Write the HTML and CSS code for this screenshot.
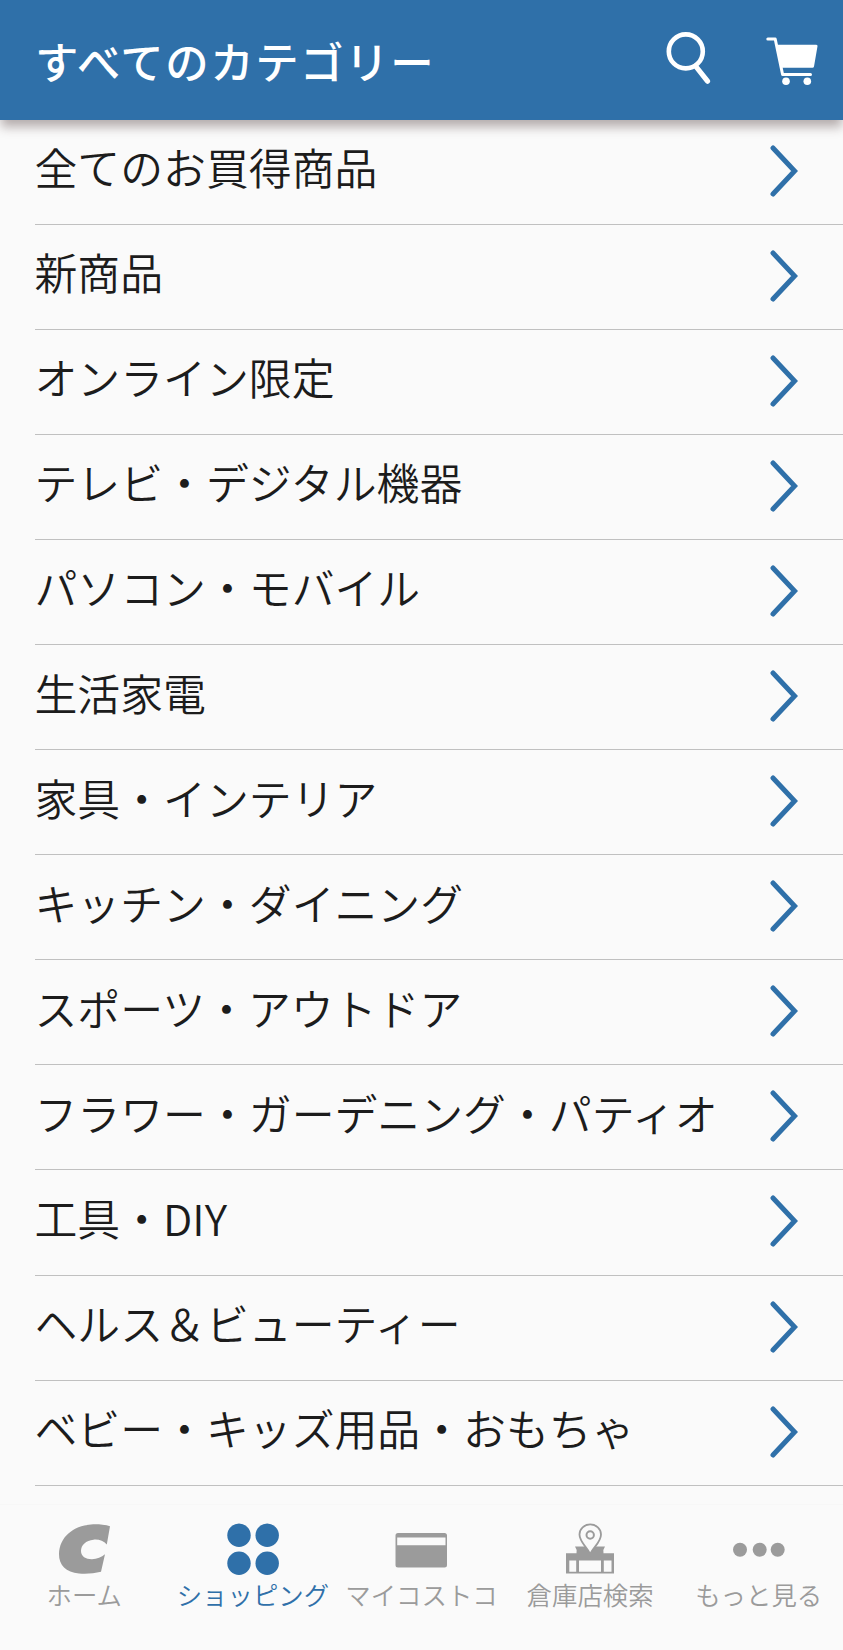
FILE: index.html
```html
<!DOCTYPE html>
<html lang="ja">
<head>
<meta charset="utf-8">
<title>すべてのカテゴリー</title>
<link rel="stylesheet" href="styles.css">
</head>
<body>
<svg class="defs" width="0" height="0">
  <symbol id="chevron" viewBox="0 0 28 52"><path d="M3 3 24.600 26 3 49" fill="none" stroke="currentColor" stroke-width="5" stroke-linecap="round"/></symbol>
</svg>
<div class="screen">
  <header class="topbar">
    <h1 class="title">すべてのカテゴリー</h1>
    <svg class="search" viewBox="0 0 46 52"><circle cx="19.800" cy="19.400" r="17" fill="none" stroke="#fff" stroke-width="4.600"/><path d="M29.500 34 41.500 49.200" stroke="#fff" stroke-width="5.200" stroke-linecap="round"/></svg>
    <svg class="cart" viewBox="0 0 54 50"><path d="M1.800 3h7.400L16.600 38.500H44.500" fill="none" stroke="#fff" stroke-width="3" stroke-linecap="round" stroke-linejoin="round"/><path d="M10 8.800H50.300Q51.800 8.800 51.500 10.300L48 30.500Q47.700 31.700 46.500 31.700H14.800z" fill="#fff"/><circle cx="20" cy="45.200" r="3.800" fill="#fff"/><circle cx="41.300" cy="45.200" r="3.800" fill="#fff"/></svg>
  </header>
  <ul class="list">
    <li class="row"><span class="label">全てのお買得商品</span><svg class="chevron"><use href="#chevron"/></svg></li>
    <li class="row"><span class="label">新商品</span><svg class="chevron"><use href="#chevron"/></svg></li>
    <li class="row"><span class="label">オンライン限定</span><svg class="chevron"><use href="#chevron"/></svg></li>
    <li class="row"><span class="label">テレビ・デジタル機器</span><svg class="chevron"><use href="#chevron"/></svg></li>
    <li class="row"><span class="label">パソコン・モバイル</span><svg class="chevron"><use href="#chevron"/></svg></li>
    <li class="row"><span class="label">生活家電</span><svg class="chevron"><use href="#chevron"/></svg></li>
    <li class="row"><span class="label">家具・インテリア</span><svg class="chevron"><use href="#chevron"/></svg></li>
    <li class="row"><span class="label">キッチン・ダイニング</span><svg class="chevron"><use href="#chevron"/></svg></li>
    <li class="row"><span class="label">スポーツ・アウトドア</span><svg class="chevron"><use href="#chevron"/></svg></li>
    <li class="row"><span class="label">フラワー・ガーデニング・パティオ</span><svg class="chevron"><use href="#chevron"/></svg></li>
    <li class="row"><span class="label">工具・DIY</span><svg class="chevron"><use href="#chevron"/></svg></li>
    <li class="row"><span class="label">ヘルス＆ビューティー</span><svg class="chevron"><use href="#chevron"/></svg></li>
    <li class="row"><span class="label">ベビー・キッズ用品・おもちゃ</span><svg class="chevron"><use href="#chevron"/></svg></li>
  </ul>
  <nav class="tabs">
    <a class="tab">
      <svg class="icon" viewBox="0 0 54 54"><path d="M53 3.200 49.800 21.500C46.500 17.500 41.500 16.200 36.500 16.700 29 17.500 24 22 24 28 24 33.500 29 36.300 35 36.200 40 36 44.500 34.200 48 31.200L44 48.800C37 50.500 29 51.200 22 50.500 9 49.200 1.800 42 2 31 2.500 14 16 3 34 1.500 40.500 1 47.500 1.700 53 3.200z" fill="currentColor"/></svg>
      <span class="name">ホーム</span>
    </a>
    <a class="tab active">
      <svg class="icon" viewBox="0 0 54 54"><g fill="currentColor"><circle cx="13" cy="12.200" r="11.700"/><circle cx="41.200" cy="12.200" r="11.700"/><circle cx="13" cy="40.300" r="11.700"/><circle cx="41.200" cy="40.300" r="11.700"/></g></svg>
      <span class="name">ショッピング</span>
    </a>
    <a class="tab">
      <svg class="icon" viewBox="0 0 54 54"><path fill="currentColor" fill-rule="evenodd" d="M4 10H50.500Q53 10 53 12.500V42Q53 44.500 50.500 44.500H4Q1.500 44.500 1.500 42V12.500Q1.500 10 4 10zM3.200 14.500V22.300H51.500V14.500z"/></svg>
      <span class="name">マイコストコ</span>
    </a>
    <a class="tab">
      <svg class="icon" viewBox="0 0 54 54"><path fill="currentColor" fill-rule="evenodd" d="M12 23.500H42Q39.500 27 40.500 30.300H51V50.500H3V30.300H13.500Q14.500 27 12 23.500zM6.300 37.500V48.700H13.200V37.500zM16 37.500V48.700H38V37.500zM40.800 37.500V48.700H48.500V37.500z"/><path d="M27.200 31C24 24 16.500 19 16.500 11.500A10.700 10 0 0 1 38 11.500C38 19 30.500 24 27.200 31z" fill="#fafafa" stroke="currentColor" stroke-width="1.800"/><circle cx="27.200" cy="12" r="3.700" fill="none" stroke="currentColor" stroke-width="2"/></svg>
      <span class="name">倉庫店検索</span>
    </a>
    <a class="tab">
      <svg class="icon" viewBox="0 0 54 54"><g fill="currentColor"><circle cx="8" cy="26.700" r="7"/><circle cx="27.700" cy="26.700" r="7"/><circle cx="45.700" cy="26.700" r="7"/></g></svg>
      <span class="name">もっと見る</span>
    </a>
  </nav>
</div>
</body>
</html>
```
FILE: styles.css
```css
* { box-sizing: border-box; }
body {
  margin: 0;
  background: #fafafa;
  color: #1c1c1c;
  font-family: "Noto Sans CJK JP", sans-serif;
}
.defs { display: block; }
.screen {
  display: flex;
  flex-direction: column;
  width: 843px;
  height: 1650px;
  overflow: hidden;
}
.topbar {
  display: flex;
  align-items: flex-start;
  flex: none;
  height: 120px;
  padding: 32px 23px 0 35px;
  background: #2f70a9;
  box-shadow: 0 8px 10px -1px rgba(60, 40, 40, .36);
  z-index: 1;
}
.title {
  flex: 1;
  margin: -2px 0 0;
  color: #fff;
  font-size: 43.4px;
  letter-spacing: 1.6px;
  line-height: 60px;
  font-weight: 500;
  white-space: nowrap;
}
.search { width: 46px; height: 52px; margin-right: 54px; }
.cart { width: 54px; height: 50px; margin-top: 4px; }
.list {
  flex: none;
  margin: 0;
  padding: 0 0 0 34.5px;
  list-style: none;
}
.row {
  display: flex;
  align-items: center;
  justify-content: space-between;
  height: 105.1px;
  padding: 0 45px 2px 0;
  border-bottom: 1px solid #c0c0c0;
}
.row:first-child { height: 104.6px; }
.label {
  padding-bottom: 9px;
  font-size: 42.87px;
  line-height: 60px;
  font-weight: 350;
  white-space: nowrap;
}
.chevron { width: 28px; height: 52px; color: #2f70a9; }
.tabs {
  display: grid;
  grid-template-columns: repeat(5, 1fr);
  flex: 1;
  margin-top: 18px;
  padding-top: 18px;
  border-top: 1px solid #f7f7f7;
}
.tab {
  display: flex;
  flex-direction: column;
  align-items: center;
  color: #9b9b9b;
}
.active { color: #2f70a9; }
.icon { width: 54px; height: 54px; }
.name {
  font-size: 25.4px;
  line-height: 35px;
  font-weight: 350;
  white-space: nowrap;
}
```
